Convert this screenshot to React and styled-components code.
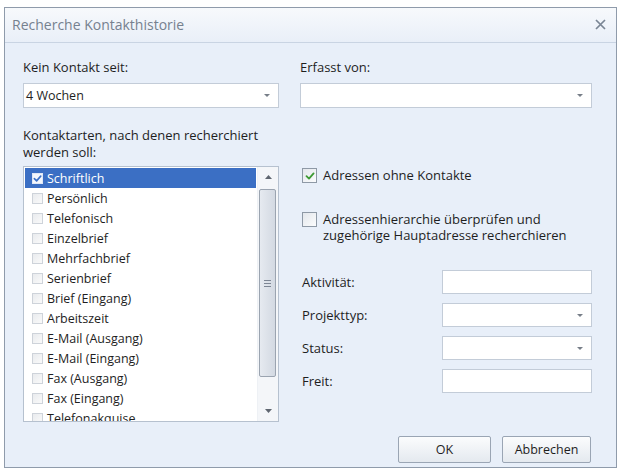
import styled, { createGlobalStyle } from "styled-components";

const GlobalStyle = createGlobalStyle`
  html, body { margin: 0; padding: 0; background: #ffffff; }
  body { font-family: "Open Sans", "Noto Sans", sans-serif; font-size: 13px; color: #1e1e1e; }
`;

const kontaktarten = [
  "Schriftlich",
  "Persönlich",
  "Telefonisch",
  "Einzelbrief",
  "Mehrfachbrief",
  "Serienbrief",
  "Brief (Eingang)",
  "Arbeitszeit",
  "E-Mail (Ausgang)",
  "E-Mail (Eingang)",
  "Fax (Ausgang)",
  "Fax (Eingang)",
  "Telefonakquise",
];

const Check = ({ color = "#3d9a34", size = 10 }) => (
  <svg width={size} height={size} viewBox="0 0 10 10">
    <path d="M1.5 5.2 L4 7.6 L8.6 2.4" fill="none" stroke={color} strokeWidth="1.8" strokeLinecap="round" strokeLinejoin="round" />
  </svg>
);

const Arrow = ({ up }) => (
  <svg width="7" height="4" viewBox="0 0 7 4">
    <path d={up ? "M0 4 L3.5 0 L7 4 Z" : "M0 0 L7 0 L3.5 4 Z"} fill="#5f6670" />
  </svg>
);

const App = () => {
  return (
    <>
      <GlobalStyle />
      <Dialog>
        <TitleBar>
          <Title>Recherche Kontakthistorie</Title>
          <Close>
            <svg width="11" height="11" viewBox="0 0 11 11">
              <path d="M1 1 L10 10 M10 1 L1 10" stroke="#7a8594" strokeWidth="1.7" />
            </svg>
          </Close>
        </TitleBar>

        <Body>
          <TopRow>
            <Field>
              <Label>Kein Kontakt seit:</Label>
              <Combo>
                <span>4 Wochen</span>
                <DropArrow />
              </Combo>
            </Field>
            <Field>
              <Label>Erfasst von:</Label>
              <Combo>
                <span />
                <DropArrow />
              </Combo>
            </Field>
          </TopRow>

          <MiddleRow>
            <LeftColumn>
              <Label>Kontaktarten, nach denen recherchiert werden soll:</Label>
              <ListBox>
                <Items>
                  {kontaktarten.map((name, i) => (
                    <Item key={name} $selected={i === 0}>
                      <SmallBox $selected={i === 0}>
                        {i === 0 && <Check color="#3a6fc6" size={9} />}
                      </SmallBox>
                      {name}
                    </Item>
                  ))}
                </Items>
                <ScrollBar>
                  <ScrollButton><Arrow up /></ScrollButton>
                  <Track>
                    <Thumb>
                      <Grip />
                    </Thumb>
                  </Track>
                  <ScrollButton><Arrow /></ScrollButton>
                </ScrollBar>
              </ListBox>
            </LeftColumn>

            <RightColumn>
              <CheckRow>
                <CheckBox><Check /></CheckBox>
                <CheckText>Adressen ohne Kontakte</CheckText>
              </CheckRow>
              <CheckRow $top>
                <CheckBox />
                <CheckText>
                  Adressenhierarchie überprüfen und
                  <br />
                  zugehörige Hauptadresse recherchieren
                </CheckText>
              </CheckRow>

              <Form>
                <FormLabel>Aktivität:</FormLabel>
                <Input />
                <FormLabel>Projekttyp:</FormLabel>
                <Combo $small>
                  <span />
                  <DropArrow />
                </Combo>
                <FormLabel>Status:</FormLabel>
                <Combo $small>
                  <span />
                  <DropArrow />
                </Combo>
                <FormLabel>Freit:</FormLabel>
                <Input />
              </Form>
            </RightColumn>
          </MiddleRow>

          <Footer>
            <Button $wide>OK</Button>
            <Button>Abbrechen</Button>
          </Footer>
        </Body>
      </Dialog>
    </>
  );
};

export default App;

const Dialog = styled.div`
  margin: 7px 3px 0 4px;
  width: 613px;
  height: 461px;
  box-sizing: border-box;
  border: 1px solid #8f9bab;
  background: #e8eff9;
  display: flex;
  flex-direction: column;
`;

const TitleBar = styled.div`
  height: 35px;
  box-sizing: border-box;
  display: flex;
  align-items: center;
  justify-content: space-between;
  padding: 0 10px 2px 7px;
  background: linear-gradient(#f7f9fc, #e9eff8);
  border-bottom: 1px solid #c9d4e3;
`;

const Title = styled.div`
  font-size: 14px;
  color: #76818f;
`;

const Close = styled.div`
  display: flex;
  align-items: center;
`;

const Body = styled.div`
  flex: 1;
  padding: 16px 24px 0 18px;
  display: flex;
  flex-direction: column;
`;

const TopRow = styled.div`
  display: grid;
  grid-template-columns: 256px 1fr;
  column-gap: 21px;
`;

const Field = styled.div`
  display: flex;
  flex-direction: column;
  gap: 7px;
`;

const Label = styled.div`
  line-height: 17px;
  color: #1e1e1e;
`;

const Combo = styled.div`
  height: ${(p) => (p.$small ? "24px" : "25px")};
  box-sizing: border-box;
  background: #ffffff;
  border: 1px solid #c3ccd8;
  display: flex;
  align-items: center;
  justify-content: space-between;
  padding: 0 8px 0 2px;
  font-size: 12.5px;
`;

const DropArrow = styled.span`
  width: 0;
  height: 0;
  border-left: 3px solid transparent;
  border-right: 3px solid transparent;
  border-top: 3px solid #777e88;
`;

const MiddleRow = styled.div`
  margin-top: 19px;
  display: grid;
  grid-template-columns: 256px 1fr;
  column-gap: 21px;
`;

const LeftColumn = styled.div`
  display: flex;
  flex-direction: column;
  gap: 5px;
`;

const ListBox = styled.div`
  height: 256px;
  box-sizing: border-box;
  border: 1px solid #b6c1cf;
  background: #ffffff;
  display: flex;
  overflow: hidden;
`;

const Items = styled.div`
  flex: 1;
  padding: 1px 1px 0 1px;
  overflow: hidden;
`;

const Item = styled.div`
  height: 20px;
  display: flex;
  align-items: center;
  gap: 4px;
  padding-left: 7px;
  font-size: 12.5px;
  color: ${(p) => (p.$selected ? "#ffffff" : "#1e1e1e")};
  background: ${(p) => (p.$selected ? "#3b6fc4" : "transparent")};
`;

const SmallBox = styled.span`
  width: 11px;
  height: 11px;
  box-sizing: border-box;
  border: 1px solid ${(p) => (p.$selected ? "#dfe7f5" : "#ced3da")};
  background: ${(p) => (p.$selected ? "#f4f7fc" : "linear-gradient(135deg, #e9ebee, #fafafa)")};
  display: flex;
  align-items: center;
  justify-content: center;
  flex-shrink: 0;
`;

const ScrollBar = styled.div`
  width: 20px;
  display: flex;
  flex-direction: column;
  background: #f4f6f9;
  border-left: 1px solid #eef1f5;
`;

const ScrollButton = styled.div`
  height: 20px;
  display: flex;
  align-items: center;
  justify-content: center;
`;

const Track = styled.div`
  flex: 1;
  padding: 2px 2px 24px 1px;
  display: flex;
`;

const Thumb = styled.div`
  flex: 1;
  border: 1px solid #9ba4b0;
  border-radius: 2px;
  background: linear-gradient(90deg, #e6eaf0, #d3d9e2);
  display: flex;
  align-items: center;
  justify-content: center;
`;

const Grip = styled.span`
  width: 7px;
  height: 5px;
  border-top: 1px solid #7d8694;
  border-bottom: 1px solid #7d8694;
  position: relative;
  &::after {
    content: "";
    position: absolute;
    left: 0;
    right: 0;
    top: 2px;
    border-top: 1px solid #7d8694;
  }
`;

const RightColumn = styled.div`
  display: flex;
  flex-direction: column;
  padding: 41px 0 0 2px;
`;

const CheckRow = styled.div`
  display: flex;
  align-items: ${(p) => (p.$top ? "flex-start" : "center")};
  gap: 6px;
  margin-top: ${(p) => (p.$top ? "29px" : "0")};
`;

const CheckBox = styled.span`
  width: 15px;
  height: 15px;
  box-sizing: border-box;
  border: 1px solid #8e99a6;
  background: linear-gradient(135deg, #e3e7ec, #fbfcfd);
  display: flex;
  align-items: center;
  justify-content: center;
  flex-shrink: 0;
`;

const CheckText = styled.div`
  line-height: 16px;
  margin-top: -1px;
`;

const Form = styled.div`
  margin-top: 27px;
  display: grid;
  grid-template-columns: 140px 150px;
  row-gap: 9px;
  align-items: center;
`;

const FormLabel = styled.div`
  line-height: 17px;
`;

const Input = styled.div`
  height: 24px;
  box-sizing: border-box;
  background: #ffffff;
  border: 1px solid #c3ccd8;
`;

const Footer = styled.div`
  margin-top: 14px;
  display: flex;
  justify-content: flex-end;
  gap: 11px;
  padding-right: 1px;
`;

const Button = styled.button`
  width: ${(p) => (p.$wide ? "93px" : "89px")};
  height: 27px;
  border: 1px solid #9aa5b4;
  border-radius: 2px;
  background: linear-gradient(#fbfcfd, #e4e9ef);
  font-family: "Open Sans", "Noto Sans", sans-serif;
  font-size: 12.5px;
  color: #1e1e1e;
  padding: 0;
`;
